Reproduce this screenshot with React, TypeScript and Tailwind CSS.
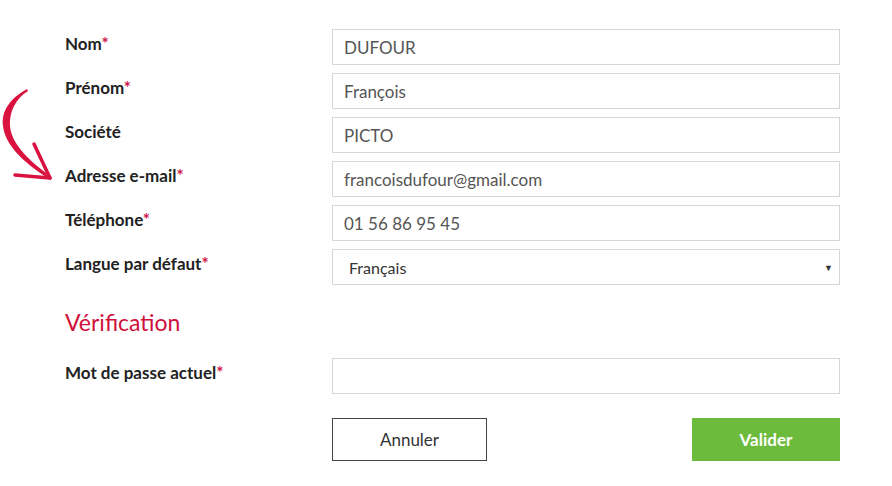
import React from "react";

const fields = [
  { label: "Nom", required: true, value: "DUFOUR" },
  { label: "Prénom", required: true, value: "François" },
  { label: "Société", required: false, value: "PICTO" },
  { label: "Adresse e-mail", required: true, value: "francoisdufour@gmail.com" },
  { label: "Téléphone", required: true, value: "01 56 86 95 45" },
];

function Label({ text, required }: { text: string; required?: boolean }) {
  return (
    <div className="pt-[5px] text-[17px] leading-[20px] font-bold text-[#222]">
      {text}
      {required && <span className="text-[#d0164a]">*</span>}
    </div>
  );
}

// Hand-drawn red arrow pointing at the e-mail field
function CurvedArrow() {
  return (
    <svg
      className="absolute left-0 top-[86px]"
      width="60"
      height="100"
      viewBox="0 0 60 100"
    >
      <path
        d="M27 3 C11 12 1 24 3 40 C5 59 24 77 48 92 L46 87 C27 73 11 56 10 40 C9 26 16 12 28 5 Z"
        fill="#d9123f"
      />
      <path
        d="M34 58 L50 92"
        stroke="#d9123f"
        strokeWidth="3.5"
        strokeLinecap="round"
        fill="none"
      />
      <path
        d="M15 89 L50 92"
        stroke="#d9123f"
        strokeWidth="3.5"
        strokeLinecap="round"
        fill="none"
      />
    </svg>
  );
}

export default function App() {
  return (
    <div
      className="relative w-[892px] h-[486px] bg-white overflow-hidden"
      style={{ fontFamily: "Lato, 'Liberation Sans', sans-serif" }}
    >
      <CurvedArrow />
      <div className="pl-[65px] pt-[29px]">
        <div className="grid grid-cols-[267px_508px] gap-y-[8px]">
          {fields.map((f) => (
            <React.Fragment key={f.label}>
              <Label text={f.label} required={f.required} />
              <div className="h-[36px] border border-[#d6d6d6] flex items-center pl-[11px] pt-[2px] text-[17px] text-[#555]">
                {f.value}
              </div>
            </React.Fragment>
          ))}
          <Label text="Langue par défaut" required />
          <div className="h-[36px] border border-[#d6d6d6] flex items-center justify-between pl-[16px] pr-[6px] pt-[2px] text-[16px] text-[#333]">
            <span>Français</span>
            <span className="text-[9px] text-[#333]">▼</span>
          </div>
        </div>

        <h2 className="mt-[23px] text-[23px] leading-[28px] text-[#d0103a] font-normal">
          Vérification
        </h2>

        <div className="mt-[22px] grid grid-cols-[267px_508px]">
          <Label text="Mot de passe actuel" required />
          <div className="h-[36px] border border-[#d6d6d6]" />
        </div>

        <div className="mt-[24px] grid grid-cols-[267px_508px]">
          <div />
          <div className="flex justify-between">
            <button className="w-[155px] h-[43px] border border-[#444] bg-white text-[17px] text-[#333]">
              Annuler
            </button>
            <button className="w-[148px] h-[43px] bg-[#6dbb3d] text-[17px] font-bold text-white">
              Valider
            </button>
          </div>
        </div>
      </div>
    </div>
  );
}
